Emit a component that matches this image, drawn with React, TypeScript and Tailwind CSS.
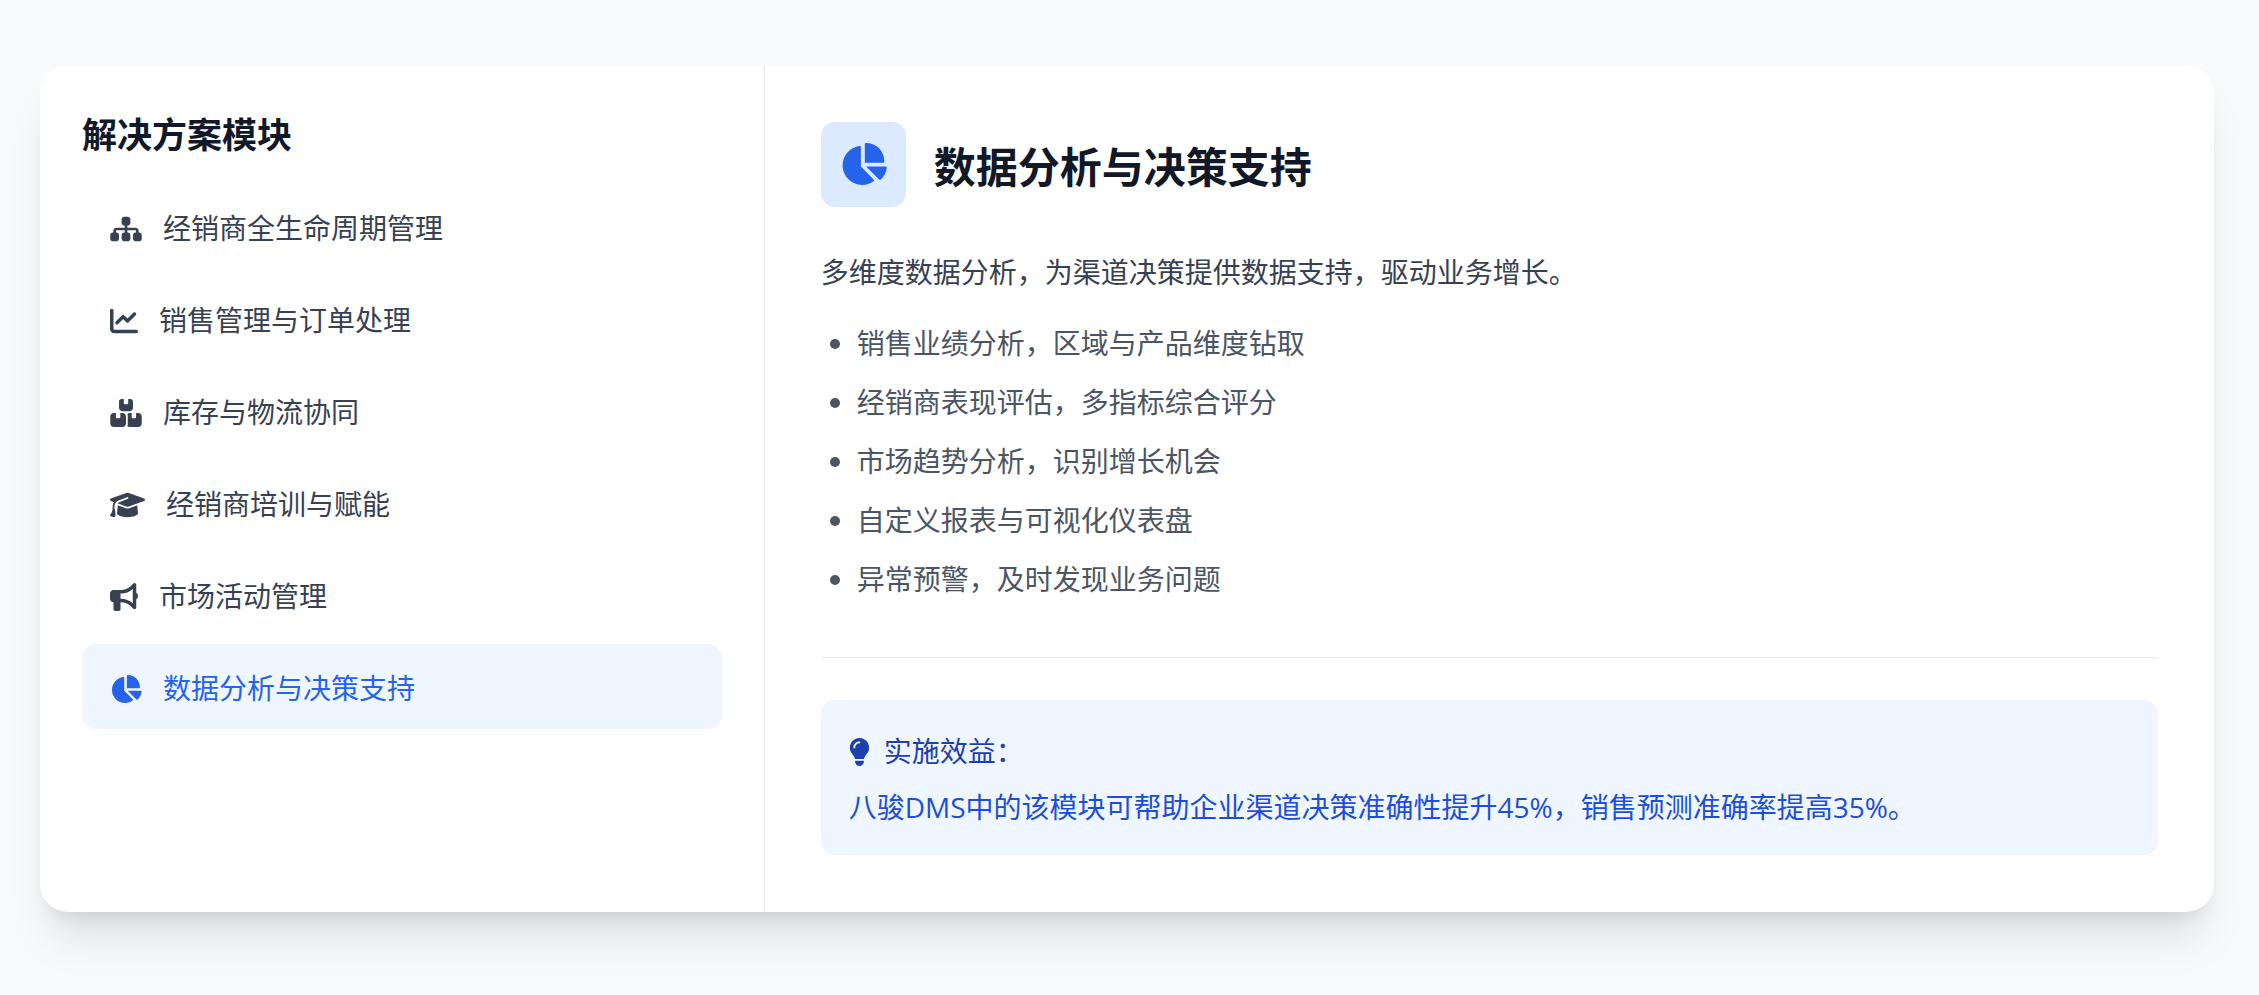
import React from 'react';
import {
  FaSitemap,
  FaChartLine,
  FaBoxesStacked,
  FaGraduationCap,
  FaBullhorn,
  FaChartPie,
  FaLightbulb
} from 'react-icons/fa6';

const modules = [
  { title: '经销商全生命周期管理', icon: FaSitemap, width: 'w-8' },
  { title: '销售管理与订单处理', icon: FaChartLine, width: 'w-7' },
  { title: '库存与物流协同', icon: FaBoxesStacked, width: 'w-8' },
  { title: '经销商培训与赋能', icon: FaGraduationCap, width: 'w-[35px]' },
  { title: '市场活动管理', icon: FaBullhorn, width: 'w-7' },
  { title: '数据分析与决策支持', icon: FaChartPie, width: 'w-8' },
];

const features = [
  '销售业绩分析，区域与产品维度钻取',
  '经销商表现评估，多指标综合评分',
  '市场趋势分析，识别增长机会',
  '自定义报表与可视化仪表盘',
  '异常预警，及时发现业务问题',
];

const active = 5;

const App: React.FC = () => {
  return (
    <div className="min-h-screen bg-[#f8fafc] pl-10 pr-[45px] pt-[65px] pb-20 font-['Open_Sans','Noto_Sans_CJK_SC',sans-serif] text-[28px] leading-[43px]" lang="zh-CN">
      <div className="flex bg-white rounded-[28px] overflow-hidden shadow-[0_35px_44px_-9px_rgba(0,0,0,0.1),0_14px_18px_-11px_rgba(0,0,0,0.1)]">
        {/* Module menu */}
        <nav className="w-1/3 shrink-0 border-r border-[#e5e7eb] px-[42px] pt-[45px] pb-[42px]">
          <h2 className="text-[35px] leading-[49px] font-bold text-[#111827] mb-[25px]">解决方案模块</h2>
          <div className="flex flex-col gap-[7px]">
            {modules.map((mod, idx) => (
              <button
                key={idx}
                type="button"
                className={`flex items-center gap-[21px] w-full px-7 pt-[23px] pb-[19px] rounded-[14px] text-left ${idx === active ? 'bg-[#eff6ff] text-[#2563eb]' : 'text-[#374151]'}`}
              >
                <mod.icon className={`h-7 shrink-0 ${mod.width}`} />
                {mod.title}
              </button>
            ))}
          </div>
        </nav>

        {/* Module details */}
        <section className="flex-1 px-14 py-[57px]">
          <div className="flex items-center gap-7 mb-11">
            <div className="size-[85px] shrink-0 rounded-[14px] bg-[#dbeafe] text-[#2563eb] pb-[2px] flex items-center justify-center">
              <FaChartPie className="h-[42px] w-[47px]" />
            </div>
            <h3 className="text-[42px] leading-[56px] pt-1 font-bold text-[#111827]">数据分析与决策支持</h3>
          </div>

          <p className="text-[#374151] mb-7">多维度数据分析，为渠道决策提供数据支持，驱动业务增长。</p>
          <ul className="list-disc pl-9 space-y-4 text-[#4b5563]">
            {features.map((item, idx) => (
              <li key={idx}>{item}</li>
            ))}
          </ul>

          <div className="mt-14 border-t border-[#e5e7eb] pt-[42px]">
            <div className="rounded-[14px] bg-[#eff6ff] px-7 pt-[30px] pb-[26px]">
              <h4 className="flex items-center gap-3.5 text-[#1e40af] mb-[13px]">
                <FaLightbulb className="h-7 w-[21px] shrink-0" />
                实施效益：
              </h4>
              <p className="text-[#1d4ed8]">八骏DMS中的该模块可帮助企业渠道决策准确性提升45%，销售预测准确率提高35%。</p>
            </div>
          </div>
        </section>
      </div>
    </div>
  );
};

export default App;
